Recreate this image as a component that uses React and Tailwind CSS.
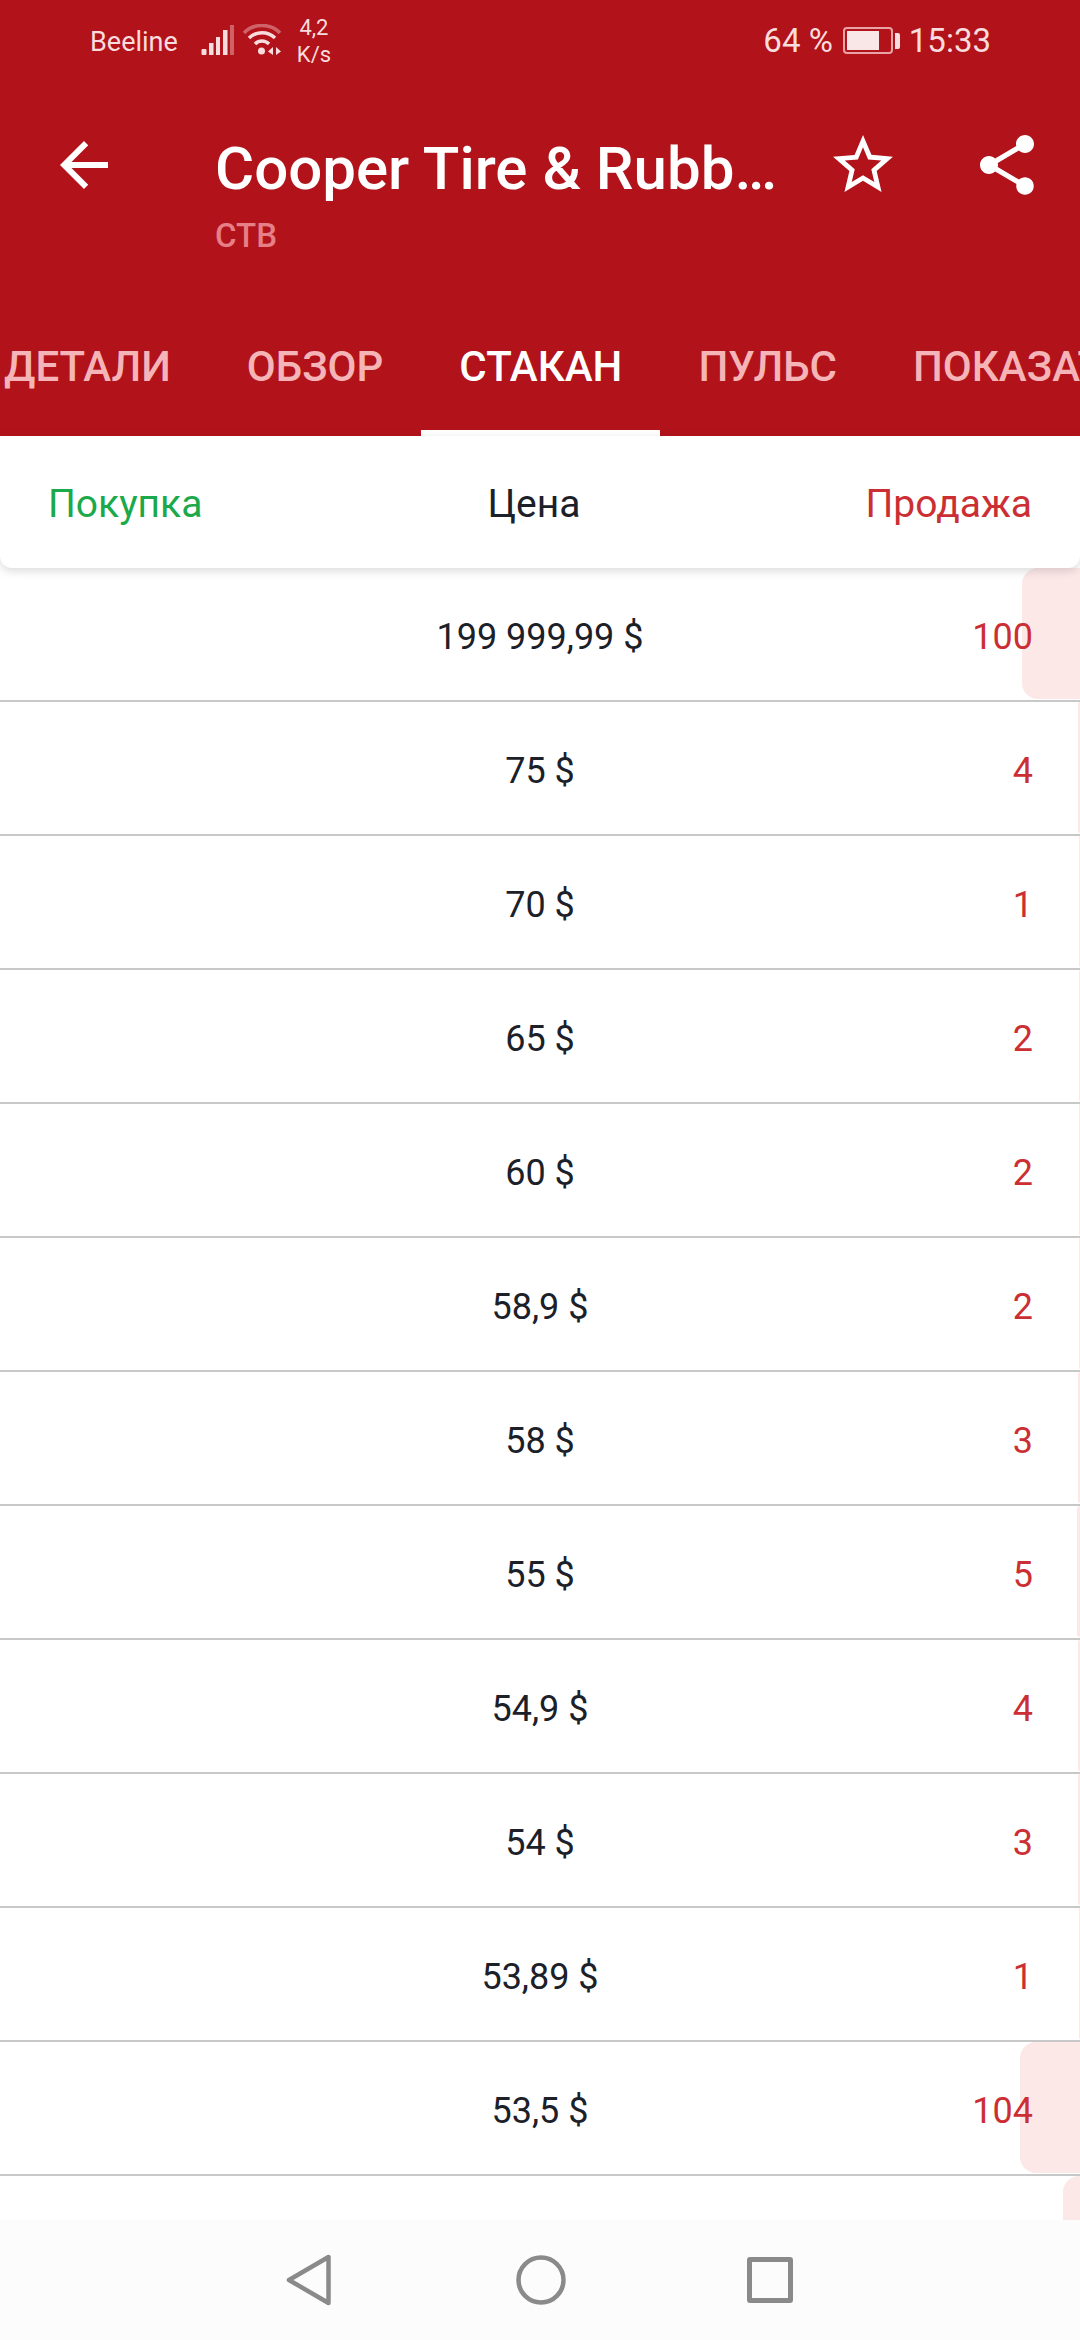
import React from 'react';

const TABS = [
  { label: 'ДЕТАЛИ' },
  { label: 'ОБЗОР' },
  { label: 'СТАКАН', active: true },
  { label: 'ПУЛЬС' },
  { label: 'ПОКАЗАТЕЛИ' },
];

// last row sits under the nav bar, only the top of its depth bar shows
const ROWS = [
  { price: '199 999,99 $', qty: 100 },
  { price: '75 $', qty: 4 },
  { price: '70 $', qty: 1 },
  { price: '65 $', qty: 2 },
  { price: '60 $', qty: 2 },
  { price: '58,9 $', qty: 2 },
  { price: '58 $', qty: 3 },
  { price: '55 $', qty: 5 },
  { price: '54,9 $', qty: 4 },
  { price: '54 $', qty: 3 },
  { price: '53,89 $', qty: 1 },
  { price: '53,5 $', qty: 104 },
  { qty: 30, hidden: true },
];

const StatusBar = () => (
  <div className="flex h-[84px] items-start justify-between pl-[90px] pr-[89px] text-[#f9dcdd]">
    <div className="flex items-start">
      <span className="mt-[24px] text-[27px] leading-[36px]">Beeline</span>
      <svg className="ml-[23px] mt-[25px]" width="34" height="31" viewBox="0 0 34 31" fill="currentColor">
        <rect x="0.5" y="24" width="5" height="6" rx="1" />
        <rect x="8" y="18" width="4.5" height="12" />
        <rect x="15" y="12" width="4" height="18" />
        <rect x="22" y="5" width="4.5" height="25" />
        <rect x="29" y="0" width="4" height="30" opacity="0.4" />
      </svg>
      <svg className="ml-[8px] mt-[24px]" width="40" height="32" viewBox="0 0 40 32" fill="none" stroke="currentColor">
        <path d="M1 9 C 10 -1, 28 -1, 37 9" strokeWidth="3.5" opacity="0.4" />
        <path d="M6 14 C 13 7, 25 7, 32 14" strokeWidth="3.5" />
        <path d="M12 20 C 16 16, 22 16, 26 20" strokeWidth="3.5" />
        <circle cx="18.5" cy="27" r="3.5" fill="currentColor" stroke="none" />
        <path d="M30 23 L25 27.5 L30 31 Z" fill="currentColor" stroke="none" />
        <path d="M33 23 L38 27.5 L33 31 Z" fill="currentColor" stroke="none" />
      </svg>
      <div className="ml-[14px] mt-[14px] flex flex-col items-center text-[22px] leading-[27px]">
        <span>4,2</span>
        <span>K/s</span>
      </div>
    </div>
    <div className="mt-[22px] flex items-start">
      <span className="text-[33px] leading-[38px]">64 %</span>
      <div className="ml-[10px] mt-[5px] flex items-center">
        <div className="h-[27px] w-[50px] rounded-[4px] border-2 border-[#e9a3a6] p-[2px]">
          <div className="h-full w-[32px] bg-[#f9e6e6]" />
        </div>
        <div className="ml-[2px] h-[16px] w-[5px] rounded-r-[2px] bg-[#f9dcdd]" />
      </div>
      <span className="ml-[9px] text-[33px] leading-[38px]">15:33</span>
    </div>
  </div>
);

const Toolbar = () => (
  <div className="flex items-start">
    <svg className="ml-[48px] mt-[45px] shrink-0" width="72" height="72" viewBox="0 0 24 24" fill="#fff">
      <path d="M20 11H7.83l5.59-5.59L12 4l-8 8 8 8 1.41-1.41L7.83 13H20v-2z" />
    </svg>
    <div className="ml-[95px] mt-[45px] w-[575px] shrink-0">
      <div className="truncate text-[60px] font-medium leading-[80px] text-white">Cooper Tire &amp; Rubber Company</div>
      <div className="mt-[5px] text-[33px] font-medium leading-[44px] text-[#e67f87]">CTB</div>
    </div>
    <svg className="ml-[37px] mt-[45px] shrink-0" width="72" height="72" viewBox="0 0 24 24" fill="#fff">
      <path d="M22 9.24l-7.19-.62L12 2 9.19 8.63 2 9.24l5.46 4.73L5.82 21 12 17.27 18.18 21l-1.63-7.03L22 9.24zM12 15.4l-3.76 2.27 1-4.28-3.32-2.88 4.38-.38L12 6.1l1.71 4.04 4.38.38-3.32 2.88 1 4.28L12 15.4z" />
    </svg>
    <svg className="ml-[72px] mt-[45px] shrink-0" width="72" height="72" viewBox="0 0 24 24" fill="#fff">
      <path d="M18 16.08c-.76 0-1.44.3-1.96.77L8.91 12.7c.05-.23.09-.46.09-.7s-.04-.47-.09-.7l7.05-4.11c.54.5 1.25.81 2.04.81 1.66 0 3-1.34 3-3s-1.34-3-3-3-3 1.34-3 3c0 .24.04.47.09.7L8.04 9.81C7.5 9.31 6.79 9 6 9c-1.66 0-3 1.34-3 3s1.34 3 3 3c.79 0 1.5-.31 2.04-.81l7.12 4.16c-.05.21-.08.43-.08.65 0 1.61 1.31 2.92 2.92 2.92 1.61 0 2.92-1.31 2.92-2.92s-1.31-2.92-2.92-2.92z" />
    </svg>
  </div>
);

const Tabs = () => (
  <div className="mt-auto flex h-[140px] overflow-hidden">
    <div className="-ml-[34px] flex shrink-0">
      {TABS.map((t) => (
        <div
          key={t.label}
          className={`flex shrink-0 items-center whitespace-nowrap border-b-[6px] border-t-[6px] border-t-transparent px-[38px] text-[42px] font-medium ${
            t.active ? 'border-b-white text-white' : 'border-b-transparent text-[#f5b4b7]'
          }`}
        >
          {t.label}
        </div>
      ))}
    </div>
  </div>
);

const Row = ({ price, qty, hidden }) => (
  <div className="relative grid h-[134px] shrink-0 grid-cols-[1fr_auto_1fr] items-center border-b-2 border-[#c8c8c8] pl-[47px] pr-[47px] pt-[6px] text-[36px]">
    <div
      className="absolute bottom-[1px] right-0 top-0 rounded-l-[16px] bg-[#fde8e8]"
      style={{ width: `${Math.max(1, qty * 0.58)}px` }}
    />
    {!hidden && (
      <>
        <span />
        <span className="relative whitespace-nowrap text-center text-[#1c2028]">{price}</span>
        <span className="relative text-right text-[#cc2f33]">{qty}</span>
      </>
    )}
  </div>
);

const NavBar = () => (
  <div className="relative flex h-[120px] shrink-0 items-center bg-[#fcfcfc]">
    <svg className="ml-[285px]" width="48" height="52" viewBox="0 0 48 52" fill="none" stroke="#8a8a8a" strokeWidth="4.5" strokeLinejoin="round">
      <path d="M4 26 L43.5 3 L43.5 49 Z" />
    </svg>
    <svg className="ml-[182px]" width="52" height="52" viewBox="0 0 52 52" fill="none" stroke="#8a8a8a" strokeWidth="4.5">
      <circle cx="26" cy="26" r="22.5" />
    </svg>
    <div className="ml-[180px] h-[46px] w-[46px] rounded-[3px] border-[5px] border-[#8a8a8a]" />
  </div>
);

export default function App() {
  return (
    <div className="flex h-[2340px] w-[1080px] flex-col overflow-hidden bg-white font-['Roboto',sans-serif]">
      <header className="flex h-[436px] shrink-0 flex-col bg-[#b2121a]">
        <StatusBar />
        <Toolbar />
        <Tabs />
      </header>
      <div className="relative z-10 flex h-[132px] shrink-0 items-center justify-between rounded-b-[12px] bg-white px-[48px] pt-[4px] text-[39px] shadow-[0_3px_10px_rgba(0,0,0,0.15)]">
        <span className="text-[#1ba94a]">Покупка</span>
        <span className="text-[#1c2028]">Цена</span>
        <span className="text-[#cc2f33]">Продажа</span>
      </div>
      <div className="flex min-h-0 flex-1 flex-col overflow-hidden">
        {ROWS.map((r, i) => (
          <Row key={i} {...r} />
        ))}
      </div>
      <NavBar />
    </div>
  );
}
